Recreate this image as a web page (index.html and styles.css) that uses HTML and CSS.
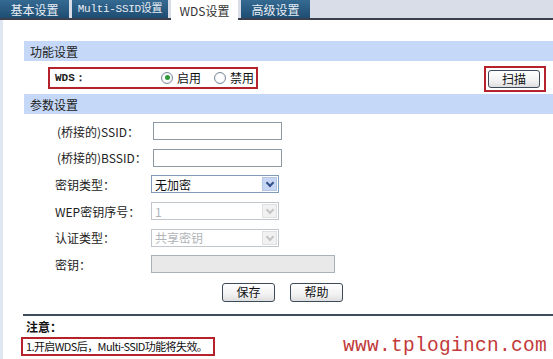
FILE: index.html
```html
<!DOCTYPE html>
<html lang="zh">
<head>
<meta charset="utf-8">
<link rel="stylesheet" href="styles.css">
</head>
<body>
<div class="page">
  <div class="tabbar">
    <div class="tab">基本设置</div>
    <div class="tab tab-wide">Multi-SSID设置</div>
    <div class="tab active">WDS设置</div>
    <div class="tab">高级设置</div>
  </div>
  <div class="frame">
    <div class="content">
      <div class="section-head">功能设置</div>
      <div class="wds-row">
        <div class="wds-box">
          <span class="wds-label">WDS：</span>
          <span class="radio checked"></span><span class="radio-text">启用</span>
          <span class="radio"></span><span class="radio-text">禁用</span>
        </div>
        <div class="scan-box"><button class="btn scan">扫描</button></div>
      </div>
      <div class="section-head">参数设置</div>
      <div class="form">
        <div class="row"><span class="label l2">(桥接的)SSID：</span><span class="input text-in"></span></div>
        <div class="row"><span class="label l2">(桥接的)BSSID：</span><span class="input text-in"></span></div>
        <div class="row"><span class="label">密钥类型：</span><span class="select"><span class="sel-val">无加密</span><span class="arrow"></span></span></div>
        <div class="row"><span class="label">WEP密钥序号：</span><span class="select disabled"><span class="sel-val">1</span><span class="arrow"></span></span></div>
        <div class="row"><span class="label">认证类型：</span><span class="select disabled"><span class="sel-val">共享密钥</span><span class="arrow"></span></span></div>
        <div class="row"><span class="label">密钥：</span><span class="input key-in"></span></div>
      </div>
      <div class="buttons">
        <button class="btn">保存</button>
        <button class="btn">帮助</button>
      </div>
      <div class="notes">
        <div class="note-title">注意：</div>
        <div class="note-line">
          <span class="note-box">1.开启WDS后，Multi-SSID功能将失效。</span>
          <span class="watermark">www.tplogincn.com</span>
        </div>
      </div>
    </div>
  </div>
</div>
</body>
</html>
```

FILE: styles.css
```css
* { box-sizing: border-box; }
html, body { margin: 0; padding: 0; background: #fff; }
body {
  font-family: "Noto Sans CJK SC", "Liberation Sans", sans-serif;
  font-size: 12px;
  color: #111;
  width: 553px;
  height: 359px;
  overflow: hidden;
}
.page { width: 553px; height: 359px; display: flex; flex-direction: column; }
.tabbar {
  height: 20px;
  flex: none;
  display: flex;
  gap: 3px;
  background: #d8dde8;
  border-bottom: 2px solid #39404c;
}
.tab {
  width: 69px;
  height: 18px;
  display: flex;
  align-items: center;
  justify-content: center;
  color: #e8eef4;
  background: linear-gradient(#356a92, #1f4d72);
  font-size: 12px;
  line-height: 1;
  padding-top: 1px;
}
.tab-wide { width: 96px; font-family: "Liberation Mono", "Noto Sans CJK SC", monospace; font-size: 11px; letter-spacing: -0.3px; }
.tab.active {
  background: #fff;
  color: #333;
  width: 67px;
  height: 20px;
  margin-bottom: -2px;
}
.frame {
  flex: 1;
  border-left: 3px solid #dfe7f2;
  display: flex;
}
.content {
  flex: 1;
  padding: 21px 0 0 21px;
  display: flex;
  flex-direction: column;
}
.section-head {
  height: 20px;
  background: #c5d8f8;
  padding-left: 6px;
  display: flex;
  align-items: center;
  color: #222;
}
.wds-row {
  height: 33px;
  display: flex;
  align-items: center;
  justify-content: space-between;
  padding: 0 7px 0 24px;
}
.wds-box {
  width: 210px;
  height: 22px;
  border: 2px solid #b5222b;
  display: flex;
  align-items: center;
  padding-left: 5px;
  white-space: nowrap;
}
.wds-box > span { flex: none; }
.wds-label { font-family: "Liberation Mono", monospace; font-size: 11px; width: 106px; font-weight: bold; color: #222; }
.radio {
  width: 12px;
  height: 12px;
  border: 1px solid #7b8a9a;
  border-radius: 50%;
  background: radial-gradient(#fff 40%, #e6e9ee);
  display: inline-flex;
  align-items: center;
  justify-content: center;
  margin-right: 4px;
}
.radio.checked::after {
  content: "";
  width: 5px;
  height: 5px;
  border-radius: 50%;
  background: #2f9a3a;
}
.radio-text { margin-right: 13px; }
.scan-box {
  border: 2px solid #b5222b;
  padding: 2px 4px 2px 2px;
  margin-top: 3px;
  display: flex;
}
.btn {
  font-family: "Noto Sans CJK SC", sans-serif;
  font-size: 12px;
  width: 53px;
  height: 19px;
  padding: 0;
  border: 1px solid #3d4a58;
  border-radius: 3px;
  background: linear-gradient(#ffffff, #f2f2f2 60%, #dedede);
  color: #111;
  line-height: 1;
}
.scan { width: 52px; height: 18px; }
.form {
  padding-top: 4px;
  display: flex;
  flex-direction: column;
}
.row {
  height: 26.6px;
  display: flex;
  align-items: center;
  padding-left: 31px;
}
.label { width: 96px; color: #222; }
.l2 { padding-left: 2px; width: 98px; }
.input {
  height: 18px;
  border: 1px solid #8d9aa6;
  background: #fff;
}
.text-in { width: 129px; }
.key-in { width: 184px; background: #e9e9e9; border-color: #a9b0b6; }
.select {
  width: 128px;
  height: 18px;
  border: 1px solid #7f9db9;
  display: flex;
  align-items: center;
  justify-content: space-between;
  padding: 0 1px 0 3px;
  background: #fff;
}
.sel-val { font-size: 12px; color: #111; }
.arrow {
  width: 15px;
  height: 14px;
  background: #c6d6f3;
  border: 1px solid #b4c6e6;
  position: relative;
}
.arrow::after {
  content: "";
  position: absolute;
  left: 4px;
  top: 2px;
  width: 4px;
  height: 4px;
  border-right: 2px solid #33508a;
  border-bottom: 2px solid #33508a;
  transform: rotate(45deg);
}
.select.disabled { border-color: #c0c6cc; }
.select.disabled .sel-val { color: #b0b4b8; }
.select.disabled .arrow { background: #f1f1f1; border-color: #e0e0e0; }
.select.disabled .arrow::after { border-color: #c4c4c4; }
.buttons {
  display: flex;
  gap: 15px;
  padding-left: 198px;
  margin-top: 5px;
}
.notes {
  margin-top: 12px;
  border-top: 2px solid #3d4d5e;
  padding-top: 3px;
  margin-left: -1px;
}
.note-title { font-weight: bold; height: 16px; line-height: 16px; padding-left: 3px; }
.note-line { display: flex; align-items: center; margin-top: 2px; }
.note-box {
  flex: none;
  border: 2px solid #b5222b;
  padding: 0 3px;
  height: 19px;
  line-height: 15px;
  width: 194px;
  margin-left: -2px;
  font-size: 11px;
  white-space: nowrap;
  letter-spacing: -0.6px;
  overflow: hidden;
}
.watermark {
  flex: none;
  margin-left: 128px;
  font-family: "Liberation Mono", monospace;
  font-size: 19.5px;
  color: #c23a3a;
  letter-spacing: 0.3px;
  white-space: nowrap;
  line-height: 18px;
}
```
